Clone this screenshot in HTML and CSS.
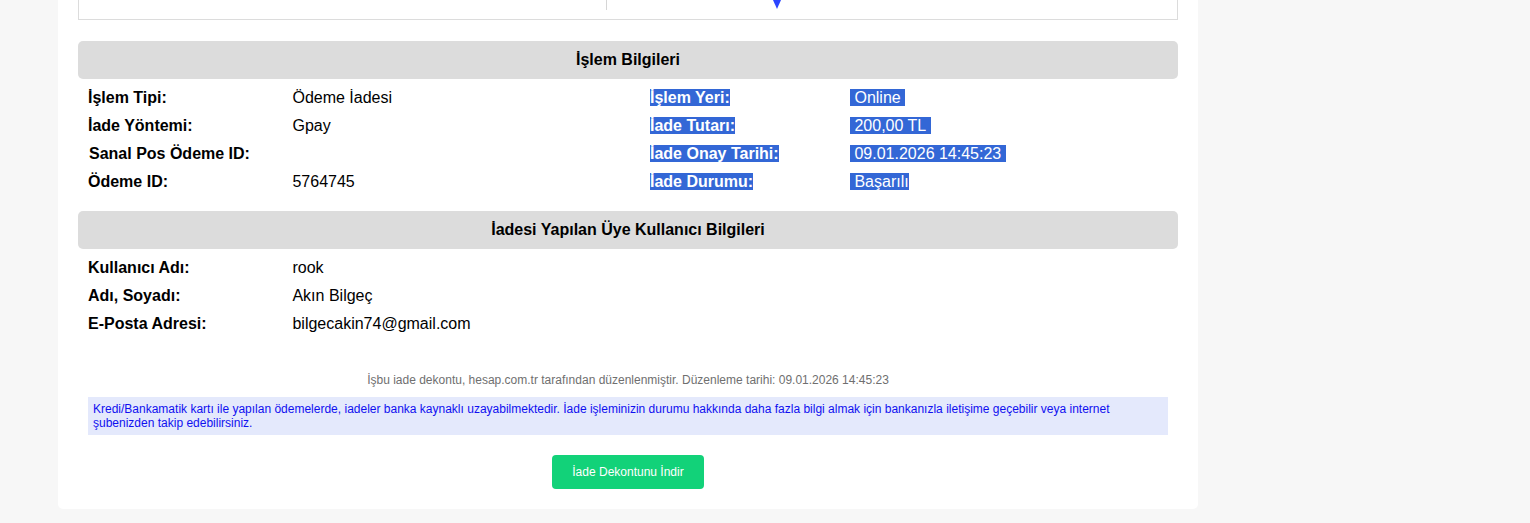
FILE: index.html
```html
<!DOCTYPE html>
<html lang="tr">
<head>
<meta charset="utf-8">
<title>İade Dekontu</title>
<link rel="stylesheet" href="styles.css">
</head>
<body>
<div class="page">
  <div class="card">
    <div class="topbox">
      <div class="topbox-left"></div>
      <div class="topbox-right">
        <svg class="arrow" width="8" height="9" viewBox="0 0 8 9"><polygon points="0,0 8,0 4,9" fill="#2b44ff"/></svg>
      </div>
    </div>

    <div class="section-head">İşlem Bilgileri</div>
    <div class="grid grid4">
      <div class="lbl">İşlem Tipi:</div>
      <div class="val">&nbsp;Ödeme İadesi</div>
      <div class="lbl"><span class="sel">İşlem Yeri:</span></div>
      <div class="val"><span class="sel">&nbsp;Online&nbsp;</span></div>

      <div class="lbl">İade Yöntemi:</div>
      <div class="val">&nbsp;Gpay</div>
      <div class="lbl"><span class="sel">İade Tutarı:</span></div>
      <div class="val"><span class="sel">&nbsp;200,00 TL&nbsp;</span></div>

      <div class="lbl lbl-shift">Sanal Pos Ödeme ID:</div>
      <div class="val"></div>
      <div class="lbl"><span class="sel">İade Onay Tarihi:</span></div>
      <div class="val"><span class="sel">&nbsp;09.01.2026 14:45:23&nbsp;</span></div>

      <div class="lbl">Ödeme ID:</div>
      <div class="val">&nbsp;5764745</div>
      <div class="lbl"><span class="sel">İade Durumu:</span></div>
      <div class="val"><span class="sel">&nbsp;Başarılı</span></div>
    </div>

    <div class="section-head">İadesi Yapılan Üye Kullanıcı Bilgileri</div>
    <div class="grid grid2">
      <div class="lbl">Kullanıcı Adı:</div>
      <div class="val">&nbsp;rook</div>
      <div class="lbl">Adı, Soyadı:</div>
      <div class="val">&nbsp;Akın Bilgeç</div>
      <div class="lbl">E-Posta Adresi:</div>
      <div class="val">&nbsp;bilgecakin74@gmail.com</div>
    </div>

    <p class="note">İşbu iade dekontu, hesap.com.tr tarafından düzenlenmiştir. Düzenleme tarihi: 09.01.2026 14:45:23</p>

    <div class="info">Kredi/Bankamatik kartı ile yapılan ödemelerde, iadeler banka kaynaklı uzayabilmektedir. İade işleminizin durumu hakkında daha fazla bilgi almak için bankanızla iletişime geçebilir veya internet şubenizden takip edebilirsiniz.</div>

    <div class="actions">
      <button class="btn" type="button">İade Dekontunu İndir</button>
    </div>
  </div>
</div>
</body>
</html>
```
FILE: styles.css
```css
html, body {
  margin: 0;
  padding: 0;
  background: #f7f7f7;
  font-family: "Liberation Sans", Arial, sans-serif;
  color: #000;
}

.page {
  padding-left: 58px;
  height: 523px;
}

.card {
  width: 1140px;
  box-sizing: border-box;
  background: #fff;
  padding: 0 20px 20px;
  border-radius: 0 0 5px 5px;
}

.topbox {
  display: flex;
  height: 20px;
  box-sizing: border-box;
  border: 1px solid #dcdcdc;
  border-top: none;
}

.topbox-left {
  width: 527px;
  height: 10px;
  border-right: 1px solid #d6d6d6;
}

.topbox-right {
  padding-left: 166px;
}

.arrow {
  display: block;
}

.section-head {
  margin-top: 21px;
  height: 38px;
  line-height: 38px;
  background: #dcdcdc;
  border-radius: 5px;
  text-align: center;
  font-weight: bold;
  font-size: 16px;
}

.grid {
  display: grid;
  padding: 5px 0 0 10px;
  font-size: 16px;
  line-height: 28px;
}

.grid4 {
  grid-template-columns: 200px 362px 200px 1fr;
}

.grid2 {
  grid-template-columns: 200px 1fr;
}

.grid + .section-head {
  margin-top: 15px;
}

.lbl {
  font-weight: bold;
  white-space: nowrap;
}

.lbl-shift {
  padding-left: 1px;
}

.val {
  white-space: nowrap;
}

.sel {
  background: #3367d6;
  color: #fff;
}

.note {
  margin: 35px 0 0;
  text-align: center;
  font-size: 12px;
  line-height: 14px;
  color: #6f6f6f;
}

.info {
  margin: 10px 10px 0;
  padding: 5px;
  background: #e4e9fc;
  color: #1010f0;
  font-size: 12px;
  line-height: 14px;
}

.actions {
  display: flex;
  justify-content: center;
  margin-top: 20px;
}

.btn {
  width: 152px;
  height: 34px;
  border: none;
  border-radius: 4px;
  background: #12d279;
  color: #fff;
  font-family: "Liberation Sans", Arial, sans-serif;
  font-size: 12px;
  cursor: pointer;
}
```
